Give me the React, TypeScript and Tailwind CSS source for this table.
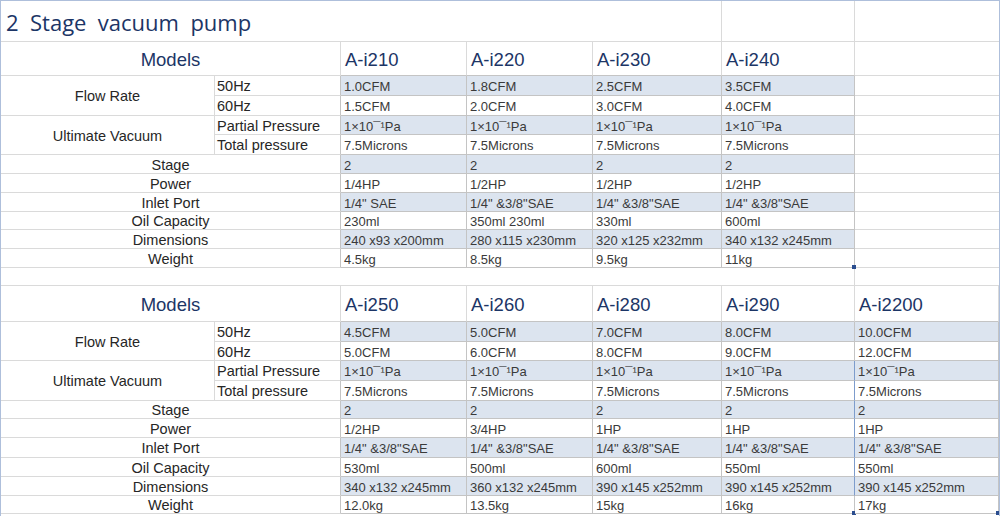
import React from "react";

const PA = "1×10¯¹Pa";

const table1 = [
  { name: "A-i210", values: ["1.0CFM", "1.5CFM", PA, "7.5Microns", "2", "1/4HP", '1/4" SAE', "230ml", "240 x93 x200mm", "4.5kg"] },
  { name: "A-i220", values: ["1.8CFM", "2.0CFM", PA, "7.5Microns", "2", "1/2HP", '1/4" &3/8"SAE', "350ml 230ml", "280 x115 x230mm", "8.5kg"] },
  { name: "A-i230", values: ["2.5CFM", "3.0CFM", PA, "7.5Microns", "2", "1/2HP", '1/4" &3/8"SAE', "330ml", "320 x125 x232mm", "9.5kg"] },
  { name: "A-i240", values: ["3.5CFM", "4.0CFM", PA, "7.5Microns", "2", "1/2HP", '1/4" &3/8"SAE', "600ml", "340 x132 x245mm", "11kg"] },
];

const table2 = [
  { name: "A-i250", values: ["4.5CFM", "5.0CFM", PA, "7.5Microns", "2", "1/2HP", '1/4" &3/8"SAE', "530ml", "340 x132 x245mm", "12.0kg"] },
  { name: "A-i260", values: ["5.0CFM", "6.0CFM", PA, "7.5Microns", "2", "3/4HP", '1/4" &3/8"SAE', "500ml", "360 x132 x245mm", "13.5kg"] },
  { name: "A-i280", values: ["7.0CFM", "8.0CFM", PA, "7.5Microns", "2", "1HP", '1/4" &3/8"SAE', "600ml", "390 x145 x252mm", "15kg"] },
  { name: "A-i290", values: ["8.0CFM", "9.0CFM", PA, "7.5Microns", "2", "1HP", '1/4" &3/8"SAE', "550ml", "390 x145 x252mm", "16kg"] },
  { name: "A-i2200", values: ["10.0CFM", "12.0CFM", PA, "7.5Microns", "2", "1HP", '1/4" &3/8"SAE', "550ml", "390 x145 x252mm", "17kg"] },
];

const singles = ["Stage", "Power", "Inlet Port", "Oil Capacity", "Dimensions", "Weight"];

const cols = "grid grid-cols-[214px_126px_126px_126px_129px_133px_1fr]";
const grid = "border-[#dadada]";
const cellBorder = "border-[#c4c4c4]";

type Model = { name: string; values: string[] };

const Handle = () => (
  <span className="absolute -right-[2px] -bottom-[2px] h-[4px] w-[4px] bg-[#2a4d8f]" />
);

const SpecTable = ({
  models,
  rows,
  handles,
  blueEdge,
  headPad,
}: {
  models: Model[];
  rows: string;
  handles: number[];
  blueEdge?: number;
  headPad: string;
}) => {
  const fillers = 5 - models.length;
  const cells: React.ReactNode[] = [];

  cells.push(
    <div key="models" className={`col-span-2 flex items-center justify-center border-r border-b ${grid} ${headPad} text-[18.5px] text-[#1c3566]`}>
      Models
    </div>
  );
  models.forEach((m) =>
    cells.push(
      <div key={m.name} className={`flex items-center border-r border-b border-r-[#dadada] ${cellBorder} ${headPad} pl-[4px] text-[18.5px] text-[#1c3566]`}>
        {m.name}
      </div>
    )
  );
  for (let i = 0; i < fillers; i++) {
    cells.push(<div key={`hf${i}`} className={`border-b ${grid} ${i < fillers - 1 ? "border-r" : ""}`} />);
  }

  for (let r = 0; r < 10; r++) {
    if (r === 0 || r === 2) {
      cells.push(
        <div key={`g${r}`} className={`row-span-2 flex items-center justify-center border-r border-b ${grid} pt-[2px] text-[14.5px] text-[#262626]`}>
          {r === 0 ? "Flow Rate" : "Ultimate Vacuum"}
        </div>
      );
    }
    if (r < 4) {
      const sub = ["50Hz", "60Hz", "Partial Pressure", "Total pressure"][r];
      cells.push(
        <div key={`s${r}`} className={`flex items-center border-b border-r ${grid} border-r-[#c4c4c4] pt-[2px] pl-[2px] text-[14.5px] text-[#262626]`}>
          {sub}
        </div>
      );
    } else {
      cells.push(
        <div key={`s${r}`} className={`col-span-2 flex items-center justify-center border-b border-r ${grid} border-r-[#c4c4c4] pt-[2px] text-[14.5px] text-[#262626]`}>
          {singles[r - 4]}
        </div>
      );
    }
    const fill = r % 2 === 0 ? "bg-[#dce4ef]" : "bg-white";
    models.forEach((m, i) => {
      const edge = blueEdge === i && r >= 2 && r < 9 ? "border-r-[#7d9ccc]" : "";
      cells.push(
        <div
          key={`d${r}${i}`}
          className={`relative flex items-center border-r border-b ${cellBorder} ${edge} ${fill} pt-[2px] pl-[3px] text-[13px] text-[#3a3a3a]`}
        >
          {m.values[r]}
          {r === 9 && handles.includes(i) && <Handle />}
        </div>
      );
    });
    for (let i = 0; i < fillers; i++) {
      cells.push(<div key={`f${r}${i}`} className={`border-b ${grid} ${i < fillers - 1 ? "border-r" : ""}`} />);
    }
  }

  return <div className={`${cols} ${rows} leading-none`}>{cells}</div>;
};

export default function App() {
  return (
    <div
      className="h-[516px] w-[1000px] overflow-hidden border-t border-r border-l border-[#aebfdb] bg-white"
      style={{ fontFamily: '"Liberation Sans", Arial, sans-serif' }}
    >
      <div className={`${cols} h-[41px]`}>
        <div
          className={`col-span-5 flex items-center border-r border-b ${grid} pt-[2px] pl-[5px] text-[22px] whitespace-pre text-[#1c3566]`}
          style={{ fontFamily: '"Open Sans", "Noto Sans", sans-serif' }}
        >
          {"2  Stage  vacuum  pump"}
        </div>
        <div className={`border-r border-b ${grid}`} />
        <div className={`border-b ${grid}`} />
      </div>
      <SpecTable
        models={table1}
        rows="grid-rows-[34px_20px_20px_19px_20px_19px_19px_19px_18px_19px_19px]"
        handles={[3]}
        headPad="pt-[3px]"
      />
      <div className={`${cols} h-[18px]`}>
        <div className={`col-span-6 border-r border-b ${grid}`} />
        <div className={`border-b ${grid}`} />
      </div>
      <SpecTable
        models={table2}
        rows="grid-rows-[36px_20px_19px_20px_20px_18px_19px_20px_19px_19px_18px]"
        handles={[3, 4]}
        blueEdge={3}
        headPad="pt-[4px]"
      />
    </div>
  );
}
